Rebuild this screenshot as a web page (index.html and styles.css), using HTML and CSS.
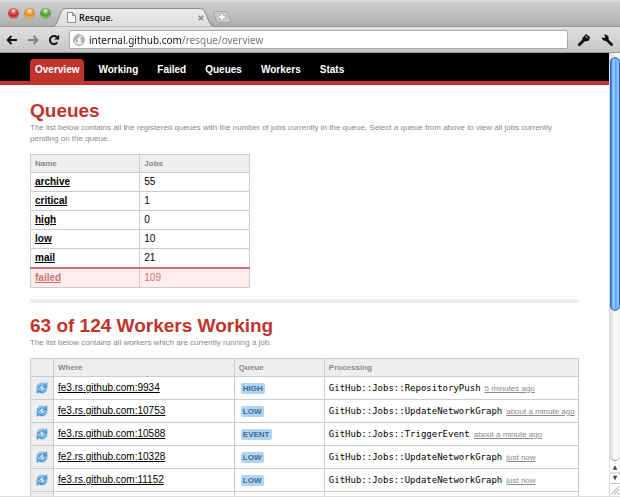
FILE: index.html
```html
<!DOCTYPE html>
<html lang="en">
<head>
<meta charset="utf-8">
<title>Resque.</title>
<link rel="stylesheet" href="styles.css">
</head>
<body>
<svg class="defs" aria-hidden="true">
  <defs>
    <linearGradient id="blue" x1="0" y1="0" x2="0" y2="1"><stop offset="0" stop-color="#7cc0ee"/><stop offset="1" stop-color="#3789cf"/></linearGradient>
    <symbol id="refresh" viewBox="0 0 12 12">
      <g fill="url(#blue)" stroke="#4c97d3" stroke-width=".5" stroke-linejoin="round">
        <path d="M1 5.6C1.2 2.4 4.2.2 7.4 1.1L9 1.9 10.9.5 11.2 5.6H6.4L8 4.1C6.2 2.9 4.3 3.9 4 5.6Z"/>
        <path d="M11 6.5C10.8 9.7 7.8 11.8 4.6 10.9L3 10.1 1 11.5.7 6.5H5.6L4 8C5.8 9.2 7.7 8.2 8 6.5Z"/>
      </g>
      <path d="M2.3 4.5C3 2.4 5 1.5 7 2" fill="none" stroke="#c3e5fa" stroke-width=".8"/>
      <path d="M2 7.5H4M9.6 7.5C9 9 7.8 9.8 6.4 9.9" fill="none" stroke="#a5d6f6" stroke-width=".8"/>
    </symbol>
  </defs>
</svg>
<header class="browser">
  <div class="tabstrip">
    <div class="lights"><span class="light red"></span><span class="light amber"></span><span class="light green"></span></div>
    <div class="tab">
      <svg class="tab-shape" viewBox="0 0 164 19" preserveAspectRatio="none" aria-hidden="true">
        <defs><linearGradient id="tabfill" x1="0" y1="0" x2="0" y2="1"><stop offset="0" stop-color="#ededed"/><stop offset="1" stop-color="#dedede"/></linearGradient></defs>
        <path d="M0 18.5C4 18.5 5 17 6.5 13L10 4C11 1.5 12 .5 15 .5H147C150 .5 151 1.5 152 4L156 13C158 17 159 18.5 164 18.5" fill="url(#tabfill)" stroke="#8f8f8f"/>
      </svg>
      <svg class="page-icon" viewBox="0 0 10 12" aria-hidden="true"><path d="M.5.5H6L9.5 4V11.5H.5ZM6 .5V4H9.5" fill="#fff" stroke="#7d7d7d"/></svg>
      <span class="tab-title">Resque.</span>
      <button class="close" aria-label="Close tab"><svg viewBox="0 0 6 6"><path d="M.7.7 5.3 5.3M5.3.7.7 5.3" stroke="#888" stroke-width="1.5"/></svg></button>
    </div>
    <button class="newtab" aria-label="New tab"><svg viewBox="0 0 20 13"><path d="M3 .5H13.5C15 .5 15.5 1 16 2L19 10C19.5 12 19 12.5 17.5 12.5H6.5C5 12.5 4.500 12 4 11L1 3C.5 1.5 1 .5 3 .5Z" fill="#c8c8c8" stroke="#a0a0a0"/><path d="M10 3V10M6.500 6.500H13.500" stroke="#aaa" stroke-width="3"/><path d="M10 3.500V9.500M7 6.500H13" stroke="#fff" stroke-width="2"/></svg></button>
  </div>
  <div class="toolbar">
    <button class="tool" aria-label="Back"><svg viewBox="0 0 12 12"><path d="M11 6H2M5.5 2 1.7 6 5.5 10" fill="none" stroke="#111" stroke-width="2"/></svg></button>
    <button class="tool" aria-label="Forward"><svg viewBox="0 0 12 12"><path d="M1 6H10M6.5 2 10.3 6 6.5 10" fill="none" stroke="#808080" stroke-width="2"/></svg></button>
    <button class="tool" aria-label="Reload"><svg viewBox="0 0 12 12"><path d="M9.3 8.5A4.1 4.1 0 1 1 8.8 3" fill="none" stroke="#111" stroke-width="2"/><path d="M11.2.5V5.5H6.4Z" fill="#111"/></svg></button>
    <div class="address">
      <svg class="globe" viewBox="0 0 12 12" aria-hidden="true"><circle cx="6" cy="6" r="5.3" fill="#f5f5f5" stroke="#8b8b8b"/><path d="M2 3 5 1.3 7 2 5.8 4 4 4.8 5.2 6.3 4.5 9 3 7.5 1.5 5ZM8 2.5 10.5 4.5V7L9 9.5 7.5 7.5 8.5 6 7 4.5Z" fill="#b1b1b1"/></svg>
      <input class="url" type="text" aria-label="Address" value="internal.github.com/resque/overview">
    </div>
    <button class="tool page-tool" aria-label="Developer tools"><svg viewBox="0 0 14 14"><path d="M1.5 12.5 7.5 6.5" stroke="#111" stroke-width="3"/><path d="M5 5.5 9 1 13 4 12 7.5 8.5 8.5Z" fill="#111"/><path d="M8.5 3 10.8 4.8" stroke="#ddd"/></svg></button>
    <button class="tool page-tool" aria-label="Settings"><svg viewBox="0 0 14 14"><path d="M6.5 6.5 11.5 11.5" stroke="#111" stroke-width="2.8" stroke-linecap="round"/><path d="M1.5 4.5 4.5 5 5.3 3.5 4 1.5C7 1 9.5 3.5 8.5 6.5 6 9 2.5 8 1.5 4.5Z" fill="#111"/></svg></button>
  </div>
</header>
<div class="viewport">
  <div class="page">
    <nav class="nav">
      <a class="current" href="#">Overview</a><a href="#">Working</a><a href="#">Failed</a><a href="#">Queues</a><a href="#">Workers</a><a href="#">Stats</a>
    </nav>
    <main class="main">
      <h1>Queues</h1>
      <p class="intro">The list below contains all the registered queues with the number of jobs currently in the queue. Select a queue from above to view all jobs currently pending on the queue.</p>
      <table class="queues">
        <thead><tr><th>Name</th><th>Jobs</th></tr></thead>
        <tbody>
          <tr><td><a href="#">archive</a></td><td>55</td></tr>
          <tr><td><a href="#">critical</a></td><td>1</td></tr>
          <tr><td><a href="#">high</a></td><td>0</td></tr>
          <tr><td><a href="#">low</a></td><td>10</td></tr>
          <tr><td><a href="#">mail</a></td><td>21</td></tr>
          <tr class="failed"><td><a href="#">failed</a></td><td>109</td></tr>
        </tbody>
      </table>
      <hr>
      <h1>63 of 124 Workers Working</h1>
      <p class="intro">The list below contains all workers which are currently running a job.</p>
      <table class="workers">
        <thead><tr><th class="state"></th><th class="where">Where</th><th class="queue">Queue</th><th>Processing</th></tr></thead>
        <tbody>
          <tr><td class="state"><svg><use href="#refresh"/></svg></td><td><a href="#">fe3.rs.github.com:9934</a></td><td><a class="tag" href="#">HIGH</a></td><td><code>GitHub::Jobs::RepositoryPush</code><a class="time" href="#">5 minutes ago</a></td></tr>
          <tr><td class="state"><svg><use href="#refresh"/></svg></td><td><a href="#">fe3.rs.github.com:10753</a></td><td><a class="tag" href="#">LOW</a></td><td><code>GitHub::Jobs::UpdateNetworkGraph</code><a class="time" href="#">about a minute ago</a></td></tr>
          <tr><td class="state"><svg><use href="#refresh"/></svg></td><td><a href="#">fe3.rs.github.com:10588</a></td><td><a class="tag" href="#">EVENT</a></td><td><code>GitHub::Jobs::TriggerEvent</code><a class="time" href="#">about a minute ago</a></td></tr>
          <tr><td class="state"><svg><use href="#refresh"/></svg></td><td><a href="#">fe2.rs.github.com:10328</a></td><td><a class="tag" href="#">LOW</a></td><td><code>GitHub::Jobs::UpdateNetworkGraph</code><a class="time" href="#">just now</a></td></tr>
          <tr><td class="state"><svg><use href="#refresh"/></svg></td><td><a href="#">fe3.rs.github.com:11152</a></td><td><a class="tag" href="#">LOW</a></td><td><code>GitHub::Jobs::UpdateNetworkGraph</code><a class="time" href="#">just now</a></td></tr>
          <tr><td class="state"></td><td></td><td></td><td></td></tr>
        </tbody>
      </table>
    </main>
  </div>
  <div class="scrollbar" aria-hidden="true">
    <div class="track"><div class="thumb"></div></div>
    <svg class="arrows" viewBox="0 0 11 24"><path d="M0 12H11M0 23.5H11" stroke="#bbb"/><path d="M5.5 3.5 8 8.5H3ZM5.5 20 8 15H3Z" fill="#444"/></svg>
    <svg class="grip" viewBox="0 0 11 11"><path d="M1 10 10 1M4.5 10 10 4.5M8 10 10 8" stroke="#888"/></svg>
  </div>
</div>
</body>
</html>
```
FILE: styles.css
```css
* { box-sizing: border-box; }
body {
  margin: 0;
  height: 100vh;
  display: flex;
  flex-direction: column;
  overflow: hidden;
  background: #fff;
  color: #000;
  font: 10px/12px "Liberation Sans", Arial, sans-serif;
}
.defs { flex: none; width: 0; height: 0; }
svg { display: block; }
button { padding: 0; border: 0; background: none; }

.browser { flex: none; font-family: "Noto Sans", sans-serif; }
.tabstrip {
  display: flex;
  align-items: flex-end;
  height: 27px;
  padding-left: 8px;
  background: linear-gradient(#e2e2e2 0, #cfcfcf 2px, #b0b0b0 25px);
  border-bottom: 1px solid #959595;
}
.lights { display: flex; gap: 5px; padding-bottom: 7px; }
.light {
  width: 11px;
  height: 11px;
  border: 1px solid #8888;
  border-radius: 50%;
}
.red { background: radial-gradient(circle at 50% 20%, #fff 0, #e85759 30%, #c7282b 60%, #f58c86); }
.amber { background: radial-gradient(circle at 50% 20%, #fff 0, #f2ad4a 30%, #e38d25 60%, #ffe681); }
.green { background: radial-gradient(circle at 50% 20%, #fff 0, #7abb4e 30%, #4f9d30 60%, #c6ee8f); }
.tab {
  position: relative;
  display: flex;
  align-items: center;
  width: 166px;
  height: 19px;
  margin: 0 -5px -1px 0;
  padding: 0 13px 0 16px;
}
.tab-shape { position: absolute; inset: 0; width: 100%; height: 100%; }
.page-icon { position: relative; width: 9px; height: 11px; }
.tab-title { position: relative; flex: 1; padding-left: 3px; font-size: 9px; font-weight: 500; }
.close { position: relative; width: 6px; height: 6px; }
.close svg { width: 6px; height: 6px; }
.newtab { padding-bottom: 3px; }
.newtab svg { width: 20px; height: 12px; }
.toolbar {
  display: flex;
  align-items: center;
  height: 26px;
  gap: 9px;
  padding: 0 6px 0 6px;
  background: linear-gradient(#e0e0e0, #c6c6c6);
  border-bottom: 1px solid #999;
}
.tool svg { width: 12px; height: 12px; }
.page-tool svg { width: 14px; height: 14px; }
.address {
  flex: 1;
  display: flex;
  align-items: center;
  height: 19px;
  padding-left: 3px;
  gap: 4px;
  background: #fff;
  border: 1px solid #aaa;
  border-radius: 2px;
}
.globe { width: 12px; height: 12px; }
.url {
  flex: 1;
  padding: 0;
  border: 0;
  outline: 0;
  font: 10px/16px "Noto Sans", sans-serif;
  color: transparent;
  background: linear-gradient(90deg, #111 93px, #707070 93px);
  background-clip: text;
}

.viewport { flex: 1; min-height: 0; display: flex; border-bottom: 1px solid #ddd; }
.page { flex: 1; min-width: 0; overflow: hidden; }
.nav {
  display: flex;
  align-items: flex-end;
  gap: 8px;
  height: 32px;
  padding-left: 30px;
  background: #000;
  border-bottom: 4px solid #c0342c;
}
.nav a {
  padding: 5px;
  border-radius: 4px 4px 0 0;
  color: #fff;
  font-weight: bold;
  text-decoration: none;
}
.nav { gap: 9px; }
.nav .current { background: #c0342c; }
.main { padding: 14px 30px 0; }
h1 { margin: 0; font-size: 19px; line-height: 23px; color: #c0342c; }
.intro { margin: 0 0 10px; font-size: 8px; line-height: 11px; color: #888; }
hr { height: 4px; margin: 11px 0; border: 0; background: #eee; }

table { border-collapse: collapse; table-layout: fixed; width: 100%; }
th, td { padding: 0 4px; border: 1px solid #ccc; text-align: left; vertical-align: middle; }
th { height: 18px; background: #eee; color: #888; font-size: 8px; line-height: 10px; }
td a { color: #000; }
.queues { width: 40%; }
.queues td { height: 19px; }
.queues a { font-weight: bold; }
.queues .failed td { height: 20px; background: #ffecec; border-top: 2px solid #c67474; color: #c67474; }
.queues .failed a { color: #c67474; }
.workers td { height: 23px; white-space: nowrap; }
.workers .state { width: 23px; padding: 0 5px; background: #eee; }
.state svg { width: 12px; height: 12px; }
.where { width: 33%; }
.queue { width: 90px; }
.tag {
  display: inline-block;
  margin-left: 2px;
  padding: 0 2px;
  border-radius: 2px;
  background: #b4d3ec;
  color: #32709f;
  font-size: 8px;
  line-height: 11px;
  font-weight: bold;
  text-decoration: none;
}
code { font: 9px/12px "DejaVu Sans Mono", monospace; }
.time { margin-left: 4px; font-size: 8px; color: #888; }

.scrollbar {
  display: flex;
  flex-direction: column;
  width: 11px;
  background: #fff;
  border-left: 1px solid #ddd;
}
.track {
  flex: 1;
  padding-top: 4px;
  border-radius: 0 0 6px 6px;
  background: linear-gradient(90deg, #ddd, #fff 60%, #eee);
  border-bottom: 1px solid #999;
}
.thumb {
  height: 63%;
  border: 1px solid #2f62c4;
  border-radius: 5px;
  background: linear-gradient(90deg, #3b7fe4, #a9d5fb 35%, #5aa6f2 55%, #8fd0fc);
}
.arrows { width: 100%; height: 24px; }
.grip { width: 100%; height: 11px; }
```
